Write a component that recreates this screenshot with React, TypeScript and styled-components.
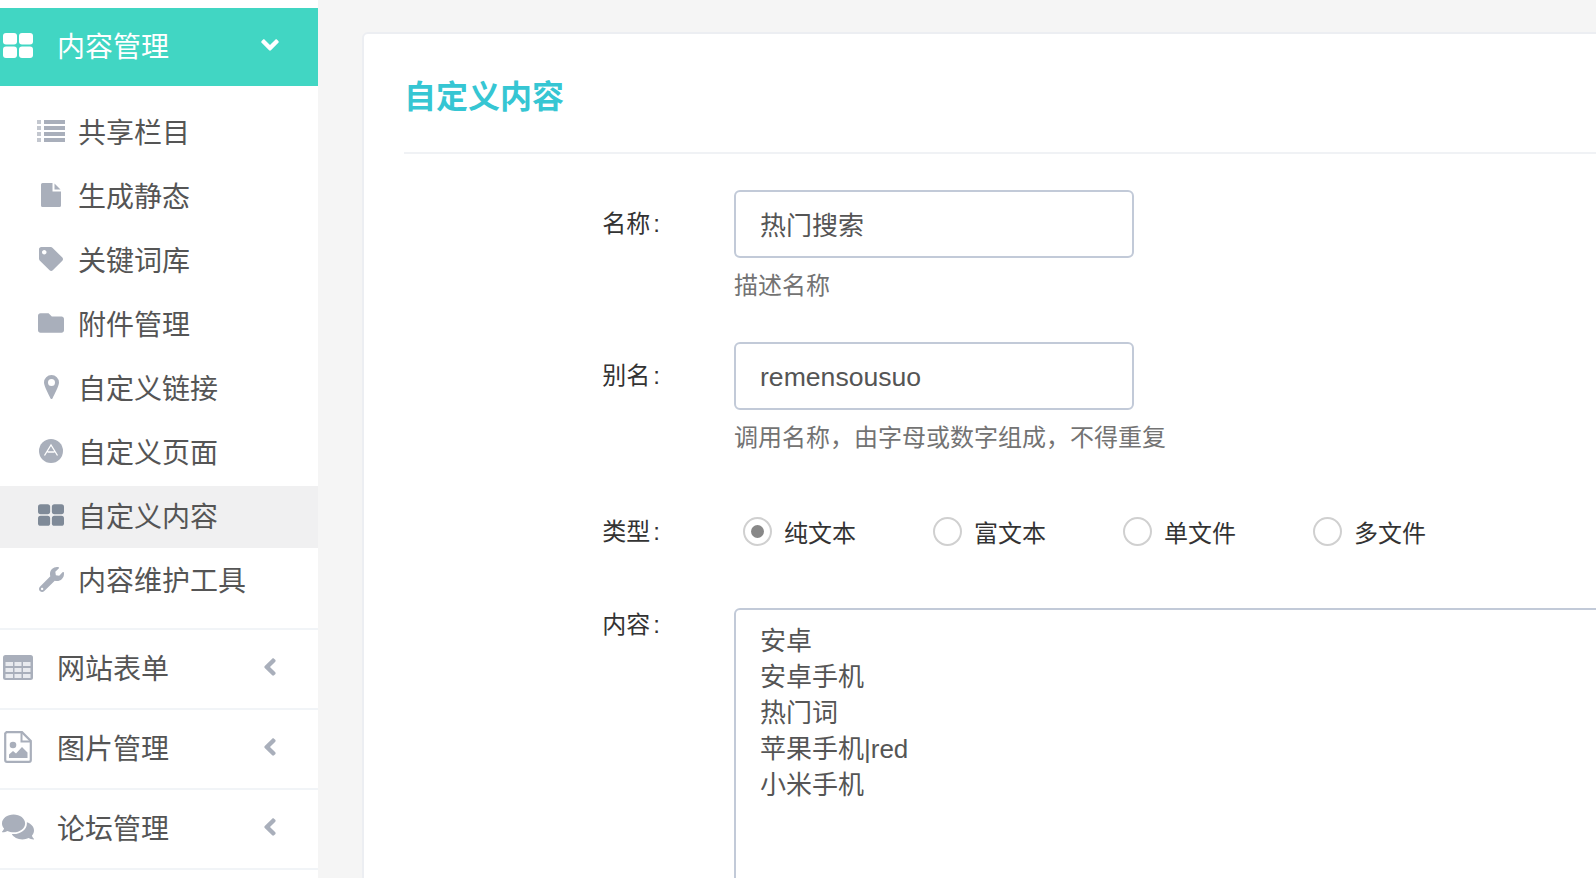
import React, { FunctionComponent } from "react"
import styled, { createGlobalStyle } from "styled-components"
import { FaTag, FaFolder, FaWrench, FaComments, FaAngleLeft, FaAngleDown } from "react-icons/fa"

const ListIcon = () => (
  <svg width="28" height="22" viewBox="0 0 28 22" fill="currentColor">
    <path d="M7 0H28V4H7zM7 6H28V10H7zM7 12H28V16H7zM7 18H28V22H7z" />
    <path opacity="0.7" d="M0 0H4V4H0zM0 6H4V10H0zM0 12H4V16H0zM0 18H4V22H0z" />
  </svg>
)

const BlocksIcon = ({ width, height }: { width: number; height: number }) => (
  <svg width={width} height={height} viewBox="0 0 30 25" fill="currentColor">
    <rect x="0" y="0" width="14" height="11.500" rx="3" />
    <rect x="16" y="0" width="14" height="11.500" rx="3" />
    <rect x="0" y="13.500" width="14" height="11.500" rx="3" />
    <rect x="16" y="13.500" width="14" height="11.500" rx="3" />
  </svg>
)

const FileIcon = () => (
  <svg width="20" height="24" viewBox="0 0 20 24" fill="currentColor">
    <path d="M1.500 0H11.500V8.500H20V22.500A1.500 1.500 0 0 1 18.500 24H1.500A1.500 1.500 0 0 1 0 22.500V1.500A1.500 1.500 0 0 1 1.500 0Z" />
    <path d="M13.500 0.500L19.500 6.500H13.500Z" />
  </svg>
)

const PinIcon = () => (
  <svg width="15" height="24" viewBox="0 0 15 24">
    <path
      fill="currentColor"
      fillRule="evenodd"
      d="M7.500 0A7.500 7.500 0 0 1 15 7.500C15 11 10 20 8.600 23.300A1.200 1.200 0 0 1 6.400 23.300C5 20 0 11 0 7.500A7.500 7.500 0 0 1 7.500 0ZM7.500 4A3.500 3.500 0 1 0 7.500 11A3.500 3.500 0 1 0 7.500 4Z"
    />
  </svg>
)

const LetterBadgeIcon = () => (
  <svg width="24" height="24" viewBox="0 0 24 24">
    <circle cx="12" cy="12" r="12" fill="currentColor" />
    <path d="M5.500 16.500L12 6L18.500 16.500M8.500 13H15.500" fill="none" stroke="#fff" strokeWidth="1.300" />
  </svg>
)

const TableIcon = () => (
  <svg width="30" height="25" viewBox="0 0 30 25">
    <rect x="0" y="0" width="30" height="25" rx="2.500" fill="currentColor" />
    <path
      fill="#e9ebef"
      d="M2.500 7H10V11H2.500zM11.500 7H18.500V11H11.500zM20 7H27.500V11H20zM2.500 13H10V17H2.500zM11.500 13H18.500V17H11.500zM20 13H27.500V17H20zM2.500 19H10V23H2.500zM11.500 19H18.500V23H11.500zM20 19H27.500V23H20z"
    />
  </svg>
)

const ImageFileIcon = () => (
  <svg width="28" height="32" viewBox="0 0 28 32">
    <path
      d="M2.500 1.200H18L26.800 10V29A1.800 1.800 0 0 1 25 30.800H3A1.800 1.800 0 0 1 1.200 29V2.500Z"
      fill="none"
      stroke="currentColor"
      strokeWidth="2.200"
    />
    <path d="M17.500 2V10.500H26" fill="none" stroke="currentColor" strokeWidth="2" />
    <circle cx="9" cy="14" r="3.300" fill="currentColor" />
    <path d="M5 27V23.500L9 20L12 22.500L18 16L23.500 21.500V27Z" fill="currentColor" />
  </svg>
)

const subItems = [
  { label: "共享栏目", icon: <ListIcon /> },
  { label: "生成静态", icon: <FileIcon /> },
  { label: "关键词库", icon: <FaTag size={24} /> },
  { label: "附件管理", icon: <FaFolder size={26} /> },
  { label: "自定义链接", icon: <PinIcon /> },
  { label: "自定义页面", icon: <LetterBadgeIcon /> },
  { label: "自定义内容", icon: <BlocksIcon width={26} height={22} />, active: true },
  { label: "内容维护工具", icon: <FaWrench size={25} /> },
]

const navItems = [
  { label: "网站表单", icon: <TableIcon /> },
  { label: "图片管理", icon: <ImageFileIcon /> },
  { label: "论坛管理", icon: <FaComments size={32} /> },
]

const radios = [
  { label: "纯文本", checked: true },
  { label: "富文本" },
  { label: "单文件" },
  { label: "多文件" },
]

const contentText = "安卓\n安卓手机\n热门词\n苹果手机|red\n小米手机"
const aliasHelp = "调用名称\uFF0C由字母或数字组成\uFF0C不得重复"

const App: FunctionComponent = () => {
  return (
    <>
      <GlobalStyle />
      <Wrapper>
        <Sidebar>
          <ActiveHeader>
            <NavIcon>
              <BlocksIcon width={30} height={25} />
            </NavIcon>
            <NavLabel>内容管理</NavLabel>
            <Caret>
              <FaAngleDown size={28} />
            </Caret>
          </ActiveHeader>
          <SubList>
            {subItems.map(item => (
              <SubRow key={item.label} $active={item.active}>
                <SubIcon $active={item.active}>{item.icon}</SubIcon>
                <span>{item.label}</span>
              </SubRow>
            ))}
          </SubList>
          {navItems.map(item => (
            <NavRow key={item.label}>
              <NavIcon>{item.icon}</NavIcon>
              <NavLabel>{item.label}</NavLabel>
              <Caret>
                <FaAngleLeft size={28} />
              </Caret>
            </NavRow>
          ))}
        </Sidebar>
        <Main>
          <Card>
            <CardTitle>自定义内容</CardTitle>
            <Form>
              <Label $top={17}>
                名称<Colon>:</Colon>
              </Label>
              <Field>
                <TextInput readOnly value="热门搜索" />
                <Help>描述名称</Help>
              </Field>
              <Label $top={17}>
                别名<Colon>:</Colon>
              </Label>
              <Field $tall>
                <TextInput readOnly value="remensousuo" $latin />
                <Help>{aliasHelp}</Help>
              </Field>
              <Label $top={2}>
                类型<Colon>:</Colon>
              </Label>
              <RadioRow>
                {radios.map(radio => (
                  <RadioItem key={radio.label}>
                    <RadioMark $checked={radio.checked} />
                    <span>{radio.label}</span>
                  </RadioItem>
                ))}
              </RadioRow>
              <Label $top={0}>
                内容<Colon>:</Colon>
              </Label>
              <TextArea readOnly value={contentText} />
            </Form>
          </Card>
        </Main>
      </Wrapper>
    </>
  )
}

const GlobalStyle = createGlobalStyle`
  html, body {
    margin: 0;
    height: 100%;
    overflow: hidden;
    background: #f5f5f5;
  }
  body, input, textarea {
    font-family: "Liberation Sans", "Noto Sans CJK SC", sans-serif;
  }
`
const Wrapper = styled.div`
  display: flex;
  width: 1596px;
  height: 878px;
  overflow: hidden;
`
const Sidebar = styled.div`
  flex: 0 0 318px;
  padding-top: 8px;
  background: #fff;
`
const ActiveHeader = styled.div`
  display: flex;
  align-items: center;
  box-sizing: border-box;
  height: 78px;
  padding-bottom: 4px;
  background: #41d6c3;
  color: #fff;
`
const NavRow = styled.div`
  display: flex;
  align-items: center;
  box-sizing: content-box;
  height: 74px;
  padding-bottom: 4px;
  border-top: 2px solid #f1f4f7;
  color: #555;

  &:last-child {
    border-bottom: 2px solid #f1f4f7;
  }
`
const NavIcon = styled.div`
  display: flex;
  justify-content: center;
  align-items: center;
  flex: 0 0 36px;
  color: #a9afbb;
  margin-right: 21px;

  ${ActiveHeader} & {
    color: #fff;
  }
`
const NavLabel = styled.span`
  flex: 1;
  font-size: 28px;
`
const Caret = styled.div`
  display: flex;
  justify-content: center;
  flex: 0 0 96px;
  color: #a9afbb;

  ${ActiveHeader} & {
    color: #fff;
  }
`
const SubList = styled.div`
  display: flex;
  flex-direction: column;
  gap: 2px;
  padding: 16px 0;
`
const SubRow = styled.div<{ $active?: boolean }>`
  display: flex;
  align-items: center;
  box-sizing: border-box;
  height: 62px;
  padding: 0 0 4px 36px;
  font-size: 28px;
  color: #555;
  background: ${p => (p.$active ? "#f0f0f1" : "transparent")};
`
const SubIcon = styled.div<{ $active?: boolean }>`
  display: flex;
  justify-content: center;
  align-items: center;
  flex: 0 0 30px;
  margin-right: 12px;
  color: ${p => (p.$active ? "#7f8a98" : "#a9afbb")};
`
const Main = styled.div`
  flex: 1;
  padding: 32px 0 0 44px;
`
const Card = styled.div`
  width: 1400px;
  height: 1200px;
  padding: 0 40px;
  background: #fff;
  border: 2px solid #eceef2;
  border-radius: 6px;
`
const CardTitle = styled.h3`
  margin: 0;
  height: 120px;
  padding-top: 40px;
  box-sizing: border-box;
  border-bottom: 2px solid #f0f2f5;
  font-size: 32px;
  line-height: 46px;
  font-weight: 700;
  color: #36c6d3;
`
const Form = styled.div`
  display: grid;
  grid-template-columns: 258px 1fr;
  column-gap: 72px;
  padding-top: 36px;
`
const Label = styled.div<{ $top: number }>`
  padding-top: ${p => p.$top}px;
  font-size: 24px;
  line-height: 34px;
  text-align: right;
  color: #333;
`
const Colon = styled.span`
  margin: 0 2px 0 3px;
`
const Field = styled.div<{ $tall?: boolean }>`
  height: ${p => (p.$tall ? 171 : 152)}px;
`
const TextInput = styled.input<{ $latin?: boolean }>`
  display: block;
  box-sizing: border-box;
  width: 400px;
  height: 68px;
  padding: ${p => (p.$latin ? "3px 24px 0" : "0 24px 2px")};
  border: 2px solid #c2cad8;
  border-radius: 6px;
  outline: none;
  font-size: ${p => (p.$latin ? 26.6 : 26)}px;
  color: #555;
`
const Help = styled.div`
  margin-top: 10px;
  font-size: 24px;
  line-height: 36px;
  color: #737373;
`
const RadioRow = styled.div`
  display: flex;
  gap: 77px;
  height: 94px;
  padding: 1px 0 0 9px;
`
const RadioItem = styled.label`
  display: flex;
  align-items: center;
  align-self: flex-start;
  gap: 12px;
  height: 34px;
  font-size: 24px;
  color: #333;
`
const RadioMark = styled.span<{ $checked?: boolean }>`
  display: flex;
  justify-content: center;
  align-items: center;
  box-sizing: border-box;
  width: 29px;
  height: 29px;
  border: 2px solid #d0d0d0;
  border-radius: 50%;

  &::after {
    content: "";
    display: ${p => (p.$checked ? "block" : "none")};
    width: 13px;
    height: 13px;
    border-radius: 50%;
    background: #888;
  }
`
const TextArea = styled.textarea`
  display: block;
  box-sizing: border-box;
  width: 1000px;
  height: 400px;
  padding: 13px 24px;
  border: 2px solid #c2cad8;
  border-radius: 6px;
  outline: none;
  resize: none;
  overflow: hidden;
  font-size: 26px;
  line-height: 36px;
  color: #555;
`
export default App
